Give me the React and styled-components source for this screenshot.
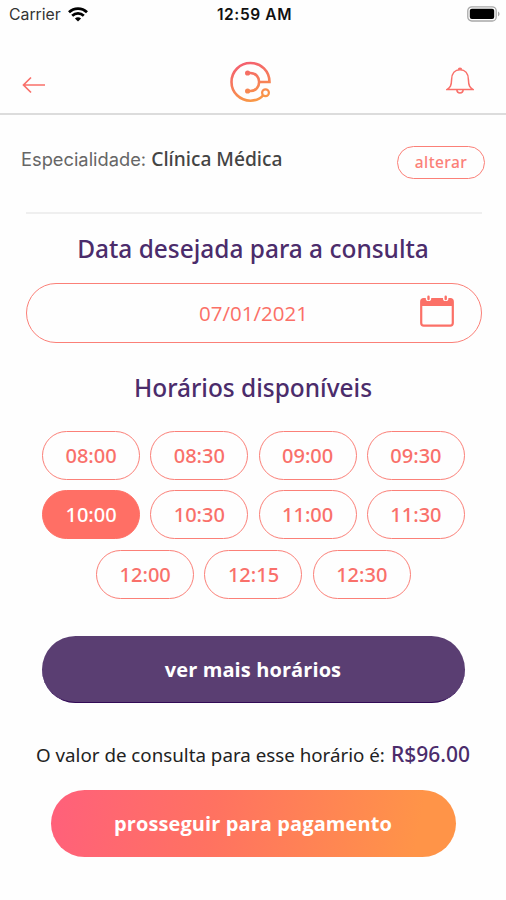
import styled, { createGlobalStyle, css } from "styled-components";

const rows = [
    ['08:00', '08:30', '09:00', '09:30'],
    ['10:00', '10:30', '11:00', '11:30'],
    ['12:00', '12:15', '12:30'],
];

function App() {
    return (
        <Container>
            <GlobalStyle />
            <StatusBar>
                <Carrier>
                    <span>Carrier</span>
                    <WifiIcon />
                </Carrier>
                <Clock>12:59 AM</Clock>
                <BatteryIcon />
            </StatusBar>

            <Header>
                <BackIcon />
                <Logo />
                <BellIcon />
            </Header>

            <Specialty>
                <SpecialtyText>
                    Especialidade: <strong>Clínica Médica</strong>
                </SpecialtyText>
                <ChangeButton>alterar</ChangeButton>
            </Specialty>

            <Title>Data desejada para a consulta</Title>
            <DateField>
                <span>07/01/2021</span>
                <CalendarIcon />
            </DateField>

            <Title $small>Horários disponíveis</Title>
            <Times>
                {rows.map((row) => (
                    <TimeRow key={row[0]}>
                        {row.map((time) => (
                            <Time key={time} $active={time === '10:00'}>{time}</Time>
                        ))}
                    </TimeRow>
                ))}
            </Times>

            <MoreButton>ver mais horários</MoreButton>
            <Price>
                <span>O valor de consulta para esse horário é:</span>
                <strong>R$96.00</strong>
            </Price>
            <PayButton>prosseguir para pagamento</PayButton>
        </Container>
    )
}

export default App;

function WifiIcon() {
    return (
        <svg width="20" height="15" viewBox="0 0 20 15" fill="none" stroke="#000" strokeWidth="2.7">
            <path d="M1 5.3C6 .3 14 .3 19 5.3" />
            <path d="M4.2 8.7C7.5 5.5 12.5 5.5 15.8 8.7" />
            <path d="M10 14.6L6.9 11.5C8.6 9.8 11.4 9.8 13.1 11.5Z" fill="#000" stroke="none" />
        </svg>
    )
}

function BatteryIcon() {
    return (
        <svg width="33" height="16" viewBox="0 0 33 16">
            <rect x=".8" y=".8" width="28.4" height="14.2" rx="4" fill="none" stroke="#a8a8a8" strokeWidth="1.3" />
            <rect x="2.8" y="2.8" width="24.4" height="10.2" rx="2" fill="#000" />
            <path d="M31 5.5C33 6.3 33 9.5 31 10.3Z" fill="#a8a8a8" />
        </svg>
    )
}

function BackIcon() {
    return (
        <svg width="24" height="18" viewBox="0 0 24 18" fill="none" stroke="#f9706a" strokeWidth="1.7">
            <path d="M23 9H1.5M9 1.5L1.5 9L9 16.5" />
        </svg>
    )
}

function Logo() {
    return (
        <svg width="42" height="42" viewBox="0 0 42 42" fill="none" stroke="url(#logo)" strokeWidth="2.6">
            <defs>
                <linearGradient id="logo" gradientUnits="userSpaceOnUse" x1="14" y1="2" x2="26" y2="41">
                    <stop offset="0" stopColor="#f4606f" />
                    <stop offset="1" stopColor="#f99a45" />
                </linearGradient>
            </defs>
            <path d="M29 21H39.5C39.5 10 31 2 20.5 2C10 2 1.5 10.3 1.5 21C1.5 31.5 10 39.7 20.5 39.7C26 39.7 30.5 37.5 33.2 34.2" />
            <path d="M18 12H20.5C32 12.5 32 29.5 20.5 30H18" />
            <circle cx="17.6" cy="12" r="1.3" fill="url(#logo)" />
            <circle cx="17.6" cy="30" r="1.3" fill="url(#logo)" />
            <circle cx="35.5" cy="31.7" r="3.4" strokeWidth="2.2" />
        </svg>
    )
}

function BellIcon() {
    return (
        <svg width="28" height="28" viewBox="0 0 28 28" fill="none" stroke="#f9706a" strokeWidth="1.5">
            <path d="M1.2 22.4H26.8C23.8 20.5 22.6 19 22.4 12.5C22.3 6.4 19 2.8 14 2.8S5.7 6.4 5.6 12.5C5.4 19 4.2 20.5 1.2 22.4Z" />
            <path d="M12.5 2.8C12.5.7 15.5.7 15.5 2.8" />
            <path d="M10.8 22.6C11 27 17 27 17.2 22.6" />
        </svg>
    )
}

function CalendarIcon() {
    return (
        <svg width="34" height="32" viewBox="0 0 34 32">
            <rect x="1.2" y="4.2" width="31.6" height="26.4" rx="2.6" fill="none" stroke="#fb7067" strokeWidth="2.2" />
            <path d="M1 11V6.5Q1 3.5 4 3.5H30Q33 3.5 33 6.5V11Z" fill="#fb7067" />
            <circle cx="8.5" cy="3.4" r="2.7" fill="#fff" />
            <circle cx="25.7" cy="3.4" r="2.7" fill="#fff" />
            <path d="M8.5 1.8V4M25.7 1.8V4" stroke="#fb7067" strokeWidth="2.4" strokeLinecap="round" />
        </svg>
    )
}

const GlobalStyle = createGlobalStyle`
    * {
        box-sizing: border-box;
    }
    body {
        margin: 0;
        background-color: #fefefe;
    }
`;

const Container = styled.div`
    width: 506px;
    height: 900px;
    display: flex;
    flex-direction: column;
    align-items: center;
    font-family: "Noto Sans", "Open Sans", sans-serif;
    white-space: nowrap;
`;

const StatusBar = styled.div`
    width: 100%;
    height: 28px;
    padding: 0 6px 0 9px;
    display: grid;
    grid-template-columns: 1fr auto 1fr;
    align-items: center;
    font-family: Inter, sans-serif;
    color: #111;
    > svg {
        justify-self: end;
    }
`;

const Carrier = styled.div`
    display: flex;
    align-items: center;
    gap: 7px;
    font-size: 15.8px;
    color: #333;
`;

const Clock = styled.div`
    font-size: 15.5px;
    font-weight: 600;
    letter-spacing: 0.6px;
    margin: 0 -1px 0 -1px;
`;

const Header = styled.div`
    width: 100%;
    height: 87px;
    padding: 22px 32px 0 22px;
    display: grid;
    grid-template-columns: 1fr auto 1fr;
    align-items: center;
    border-bottom: 2px solid #dcdcdc;
    svg:first-child {
        margin-top: 6px;
    }
    svg:nth-child(2) {
        margin: 1px 0 0 6px;
    }
    svg:last-child {
        justify-self: end;
        margin-bottom: 1px;
    }
`;

const Specialty = styled.div`
    width: 456px;
    height: 99px;
    display: flex;
    justify-content: space-between;
    margin: 0 0 18px 2px;
    border-bottom: 2px solid #efefef;
`;

const SpecialtyText = styled.p`
    margin: 31px 0 0 -5px;
    font-family: Inter, sans-serif;
    font-size: 18.3px;
    line-height: 26px;
    color: #666;
    strong {
        font-family: "Noto Sans", sans-serif;
        font-size: 19.2px;
        font-weight: 500;
        color: #444;
    }
`;

const ChangeButton = styled.button`
    width: 88px;
    height: 33px;
    margin: 31px -3px 0 0;
    padding: 0 0 2px;
    border: 1.5px solid #fb8078;
    border-radius: 17px;
    background: none;
    font: 500 15.5px "Noto Sans", sans-serif;
    letter-spacing: 0.4px;
    color: #fb8078;
`;

const Title = styled.h2`
    margin: 0;
    height: ${(props) => (props.$small ? '49px' : '51px')};
    font-size: 24.45px;
    font-weight: 500;
    line-height: 33px;
    color: #4b2c6b;
`;

const DateField = styled.div`
    width: 456px;
    height: 60px;
    margin: 0 0 28px 2px;
    padding-right: 27px;
    display: grid;
    grid-template-columns: 1fr auto;
    align-items: center;
    border: 1.5px solid #fb8078;
    border-radius: 30px;
    font-family: "Open Sans", sans-serif;
    font-size: 20.5px;
    color: #fb7067;
    span {
        text-align: center;
        padding-left: 60px;
    }
    svg {
        margin-bottom: 4px;
    }
`;

const Times = styled.div`
    margin: 11px 0 37px 1px;
    display: flex;
    flex-direction: column;
    gap: 10.3px;
`;

const TimeRow = styled.div`
    display: flex;
    justify-content: center;
    gap: 10.3px;
`;

const Time = styled.button`
    width: 98px;
    height: 49px;
    padding: 0;
    border: 1.5px solid #fb8078;
    border-radius: 25px;
    background: none;
    font: 500 20px "Noto Sans", sans-serif;
    color: #f9706a;
    ${(props) => props.$active && css`
        background-color: #ff6f65;
        border-color: #ff6f65;
        color: white;
    `}
`;

const Button = styled.button`
    height: 67px;
    padding: 0;
    border: none;
    border-radius: 34px;
    font: 700 20px "Open Sans", sans-serif;
    letter-spacing: 0.1px;
    color: white;
`;

const MoreButton = styled(Button)`
    width: 423px;
    padding-top: 2px;
    background-color: #5a3e72;
    border-bottom: 1px solid #320a56;
`;

const Price = styled.p`
    margin: 36px 0 21px;
    height: 30px;
    display: flex;
    align-items: baseline;
    gap: 6px;
    font-size: 18.75px;
    line-height: 30px;
    color: #222;
    strong {
        font-size: 21px;
        font-weight: 500;
        color: #4b2c6b;
    }
`;

const PayButton = styled(Button)`
    width: 405px;
    background: linear-gradient(100deg, #ff607b, #ff7261 40%, #ff9448 90%);
`;
